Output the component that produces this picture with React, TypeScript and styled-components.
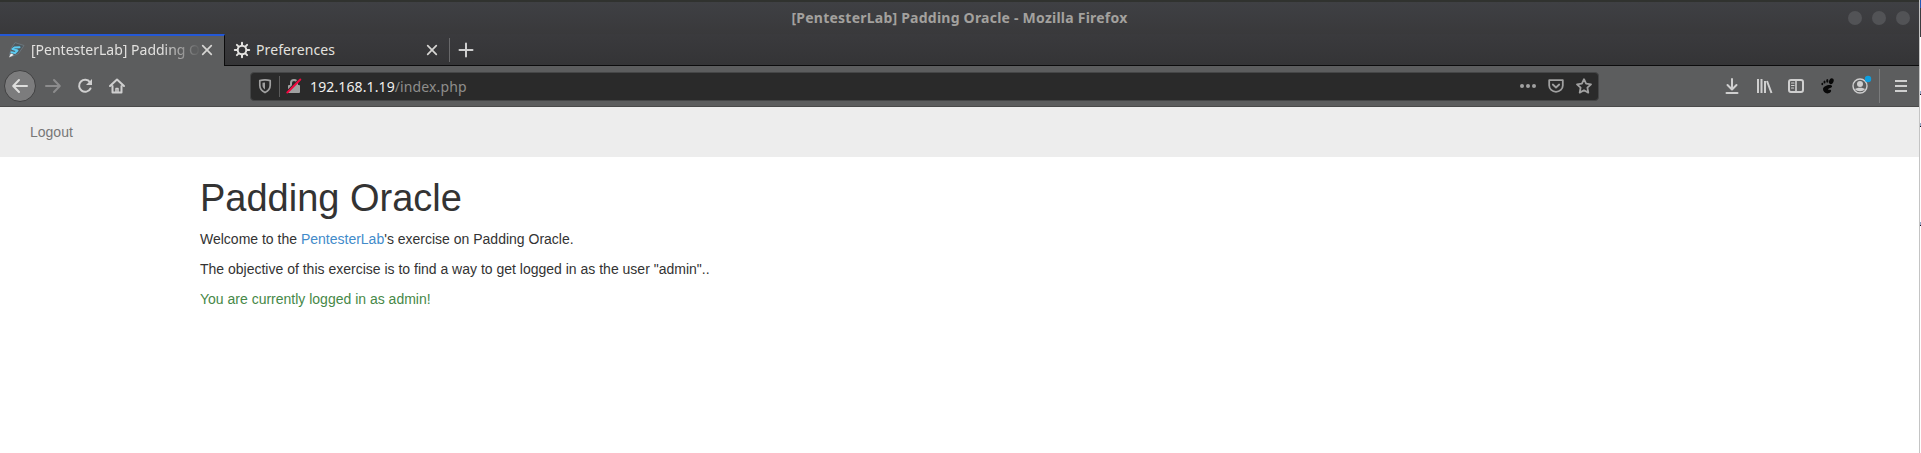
import React from 'react';
import styled, { createGlobalStyle } from 'styled-components';

const Global = createGlobalStyle`
  *{box-sizing:border-box}
  body{margin:0;background:#fff;overflow:hidden;font-family:"Liberation Sans",Arial,sans-serif;}
`;
const Desktop = styled.div`
  width:1921px;height:453px;display:flex;background:#fff;
`;
const Window = styled.div`
  width:1919px;display:flex;flex-direction:column;
`;
const DesktopEdge = styled.div`
  width:2px;display:flex;flex-direction:column;border-left:1px solid #c4c4c4;
`;
const EdgeBit = styled.i<{ $h: number; $c: string }>`
  display:block;height:${p => p.$h}px;background:${p => p.$c};
`;
const Chrome = styled.header`
  height:107px;font-family:"Noto Sans","Open Sans",sans-serif;border-bottom:1px solid #4a4a4a;
  display:flex;flex-direction:column;background:#5c5d5e;
`;
const TitleBar = styled.div`
  height:34px;border-top:2px solid #30322f;background:linear-gradient(#3f4044,#39393b);padding-bottom:1px;
  display:grid;grid-template-columns:1fr auto 1fr;align-items:center;
`;
const WindowTitle = styled.div`
  grid-column:2;font-weight:700;font-size:14px;line-height:20px;color:#a3a19e;letter-spacing:.23px;white-space:nowrap;
`;
const WindowButtons = styled.div`
  display:flex;gap:10px;justify-content:flex-end;padding-right:9px;
`;
const WindowButton = styled.i`
  width:14px;height:14px;border-radius:50%;background:#525356;
`;
const TabBar = styled.div`
  height:32px;display:flex;background:linear-gradient(#3a3a3d,#343436);
`;
const Tab = styled.div<{ $active?: boolean }>`
  width:${p => (p.$active ? 225 : 224)}px;height:32px;display:flex;align-items:center;
  padding:${p => (p.$active ? '0 9px 2px 8px' : '0 9px 1px 9px')};
  background:${p => (p.$active ? '#5c5d5e' : 'transparent')};
  border-top:2px solid ${p => (p.$active ? '#2458d6' : 'transparent')};
  border-right:${p => (p.$active ? '1px solid #0c0c0d' : '0')};
  border-bottom:${p => (p.$active ? '0' : '1px solid #0c0c0d')};
`;
const TabLabel = styled.span<{ $fade?: boolean }>`
  flex:1;margin-left:${p => (p.$fade ? 7 : 6)}px;font-size:14px;line-height:20px;color:#e2e1df;white-space:nowrap;overflow:hidden;
  letter-spacing:${p => (p.$fade ? '0' : '.1px')};
  ${p => p.$fade && 'mask-image:linear-gradient(90deg,#000 78%,transparent 101%);'}
`;
const TabEnd = styled.div`
  flex:1;display:flex;align-items:center;border-bottom:1px solid #0c0c0d;gap:8px;
`;
const Divider = styled.i<{ $h: number; $c: string; $m?: string }>`
  width:1px;height:${p => p.$h}px;background:${p => p.$c};flex:none;margin:${p => p.$m ?? '0'};
`;
const ToolBar = styled.div`
  height:40px;display:flex;align-items:center;padding:0 10px 0 4px;
`;
const BackButton = styled.div`
  width:32px;height:32px;border-radius:50%;border:1px solid #414142;background:#7c7c7d;
  display:flex;align-items:center;justify-content:center;
`;
const NavIcons = styled.div`
  display:flex;gap:16px;margin-left:9px;width:205px;
`;
const AddressBar = styled.div`
  width:1349px;height:29px;border-radius:4px;background:#2a2a2a;border:1px solid #454647;
  display:flex;align-items:center;padding:0 6px 0 6px;
`;
const Url = styled.div`
  flex:1;margin-left:8px;padding-top:1px;font-size:14px;line-height:20px;color:#f0efed;letter-spacing:.12px;
`;
const UrlPath = styled.span`
  color:#8f8e8c;
`;
const AddressActions = styled.div`
  display:flex;gap:12px;
`;
const ToolIcons = styled.div`
  display:flex;flex:1;justify-content:flex-end;align-items:center;gap:16px;
`;
const Glyph = styled.svg`
  display:block;flex:none;overflow:visible;
`;
const NavBar = styled.nav`
  height:50px;background:#ededed;padding:15px 30px;font-size:14px;line-height:20px;color:#777;
`;
const Main = styled.main`
  padding-left:200px;font-size:14px;line-height:20px;color:#333;
`;
const Heading = styled.h1`
  margin:20px 0 10px;font-size:38px;font-weight:400;line-height:42px;
`;
const Para = styled.p<{ $ok?: boolean }>`
  margin:0 0 10px;color:${p => (p.$ok ? '#468847' : '#333')};
`;
const Link = styled.a`
  color:#428bca;
`;

type IconProps = { color?: string; size?: number; children: React.ReactNode };
const Icon = ({ color = '#cfcfcf', size = 16, children }: IconProps) => (
  <Glyph width={size} height={size} viewBox="0 0 16 16" fill="none" stroke={color} strokeWidth="2" strokeLinecap="round" strokeLinejoin="round">
    {children}
  </Glyph>
);
const Close = () => (
  <Icon color="#d6d5d3"><path d="M3.700 3.700l8.600 8.600M12.300 3.700l-8.600 8.600" strokeWidth="1.700" /></Icon>
);

export default function App() {
  return (
    <>
      <Global />
      <Desktop>
        <Window>
          <Chrome>
            <TitleBar>
              <WindowTitle>[PentesterLab] Padding Oracle - Mozilla Firefox</WindowTitle>
              <WindowButtons><WindowButton /><WindowButton /><WindowButton /></WindowButtons>
            </TitleBar>
            <TabBar>
              <Tab $active>
                <Icon>
                  <path d="M7.500 .8l8.500 2.700-5.500 8L3 14.800 1.500 13 3.500 6z" fill="#4f585e" stroke="#74818a" strokeWidth=".7" />
                  <path d="M11.500 5.300L6.500 5.500 4.500 7l5 1.500L7 11l-3.500-.7" stroke="#5ccbf2" strokeWidth="2" />
                  <path d="M1 15.500l1.800-4 1.500.5 1.500 1z" fill="#f0f0f0" stroke="none" />
                </Icon>
                <TabLabel $fade>[PentesterLab] Padding Oracle</TabLabel>
                <Close />
              </Tab>
              <Tab>
                <Icon color="#e4e3e1">
                  <circle cx="8" cy="8" r="4.300" />
                  <path d="M8 .8v2M8 13.200v2M.8 8h2M13.200 8h2M2.900 2.900l1.500 1.500M11.600 11.600l1.500 1.500M13.100 2.900l-1.500 1.500M4.400 11.600l-1.500 1.500" />
                </Icon>
                <TabLabel>Preferences</TabLabel>
                <Close />
              </Tab>
              <TabEnd>
                <Divider $h={24} $c="#68686a" />
                <Icon><path d="M8 1.500v13M1.500 8h13" /></Icon>
              </TabEnd>
            </TabBar>
            <ToolBar>
              <BackButton><Icon color="#dededd"><path d="M15 8H1.500M7 2L1.200 8 7 14" /></Icon></BackButton>
              <NavIcons>
                <Icon color="#8c8c8d"><path d="M1 8h13.500M9 2l5.800 6L9 14" /></Icon>
                <Icon><path d="M13 4.300A6 6 0 1 0 13.500 10.500" /><path d="M15 1v6H9z" fill="#cfcfcf" stroke="none" /></Icon>
                <Icon><path d="M1 8l7-6.500L15 8M3.500 8v6.500h9V8" /><path d="M7 14v-3.500h2V14" strokeWidth="1.500" /></Icon>
              </NavIcons>
              <AddressBar>
                <Icon color="#a0a0a0"><path d="M8 1.800c2 0 3.700.3 5.200.8v4.700c0 3.500-2 5.700-5.200 7.300-3.200-1.600-5.200-3.800-5.200-7.300V2.600c1.500-.5 3.200-.8 5.200-.8z" strokeWidth="1.700" /><path d="M8 4.500v7C6.200 10.300 5.500 9 5.500 7.500V4.800z" fill="#a0a0a0" stroke="none" /></Icon>
                <Divider $h={21} $c="#5b5b5b" $m="0 6px" />
                <Icon color="#a0a0a0"><path d="M5 7V5a3 3 0 0 1 6 0v2" /><rect x="2" y="7" width="12" height="8" rx="1" fill="#a0a0a0" stroke="none" /><path d="M.8 13.500L13.500 .8" stroke="#2a2a2a" strokeWidth="1.500" /><path d="M1.300 14.500L14.300 1.500" stroke="#f0083f" /></Icon>
                <Url>192.168.1.19<UrlPath>/index.php</UrlPath></Url>
                <AddressActions>
                  <Icon color="#a0a0a0"><g fill="#a0a0a0" stroke="none"><circle cx="2" cy="8" r="2" /><circle cx="8" cy="8" r="2" /><circle cx="14" cy="8" r="2" /></g></Icon>
                  <Icon color="#a0a0a0"><path d="M1.200 2.200h13.600v5.300a6.800 6.300 0 0 1-13.600 0zM4.800 6.500L8 9.500l3.200-3" strokeWidth="1.800" /></Icon>
                  <Icon color="#a0a0a0"><path d="M8 1.200l2.100 4.500 4.900.6-3.600 3.400.9 4.900L8 12.200l-4.300 2.400.9-4.900L1 6.300l4.900-.6z" strokeWidth="1.800" /></Icon>
                </AddressActions>
              </AddressBar>
              <ToolIcons>
                <Icon><path d="M8 1v10M3.500 7L8 11.500 12.500 7M2.500 15h11" /></Icon>
                <Icon><path d="M2 1v14M5.500 1v14M9 3v12M11 3l4.500 12" strokeLinecap="butt" /></Icon>
                <Icon><rect x="1" y="2" width="14" height="12" rx="2" /><path d="M8 2v12" strokeWidth="1.600" /><path d="M3.500 5h2.500M3.500 7.500h2.500M3.500 10h2" strokeWidth="1.200" /></Icon>
                <Icon><g fill="#080808" stroke="none"><ellipse cx="11.300" cy="3.200" rx="2.200" ry="3" transform="rotate(25 11.300 3.200)" /><ellipse cx="7.300" cy="2.900" rx="1.100" ry="1.800" /><ellipse cx="4.500" cy="4.100" rx="1" ry="1.500" /><ellipse cx="2.300" cy="6" rx=".9" ry="1.300" /><path d="M3 11c0-3.500 8-5.500 9-3 .6 2-3.700 2-3.900 3.400 0 1 2-.2 2.900.8.600 1-1 3.200-3.500 3.200C5 15.500 3 13.500 3 11z" /></g></Icon>
                <Icon><circle cx="8" cy="8" r="7" strokeWidth="1.400" /><circle cx="8" cy="6" r="3" fill="#cfcfcf" stroke="none" /><path d="M3 11.200c1.500-2 8.500-2 10 0-2 2.600-8 2.600-10 0z" fill="#cfcfcf" stroke="none" /><circle cx="16" cy="1" r="3.200" fill="#0d9fe0" stroke="none" /></Icon>
                <Divider $h={34} $c="#7a7b7c" $m="0 -3px 0 -5px" />
                <Icon><path d="M2 3h12M2 8h12M2 13h12" strokeLinecap="butt" /></Icon>
              </ToolIcons>
            </ToolBar>
          </Chrome>
          <NavBar>Logout</NavBar>
          <Main>
            <Heading>Padding Oracle</Heading>
            <Para>Welcome to the <Link>PentesterLab</Link>'s exercise on Padding Oracle.</Para>
            <Para>The objective of this exercise is to find a way to get logged in as the user "admin"..</Para>
            <Para $ok>You are currently logged in as admin!</Para>
          </Main>
        </Window>
        <DesktopEdge>
          <EdgeBit $h={8} $c="#2458b6" />
          <EdgeBit $h={29} $c="#3b3c3f" />
          <EdgeBit $h={54} $c="#fff" />
          <EdgeBit $h={3} $c="#8fa6c6" />
          <EdgeBit $h={1} $c="#112" />
          <EdgeBit $h={28} $c="#fff" />
          <EdgeBit $h={3} $c="#8fa6c6" />
          <EdgeBit $h={1} $c="#112" />
          <EdgeBit $h={95} $c="#fff" />
          <EdgeBit $h={3} $c="#8fa6c6" />
          <EdgeBit $h={1} $c="#112" />
        </DesktopEdge>
      </Desktop>
    </>
  );
}
